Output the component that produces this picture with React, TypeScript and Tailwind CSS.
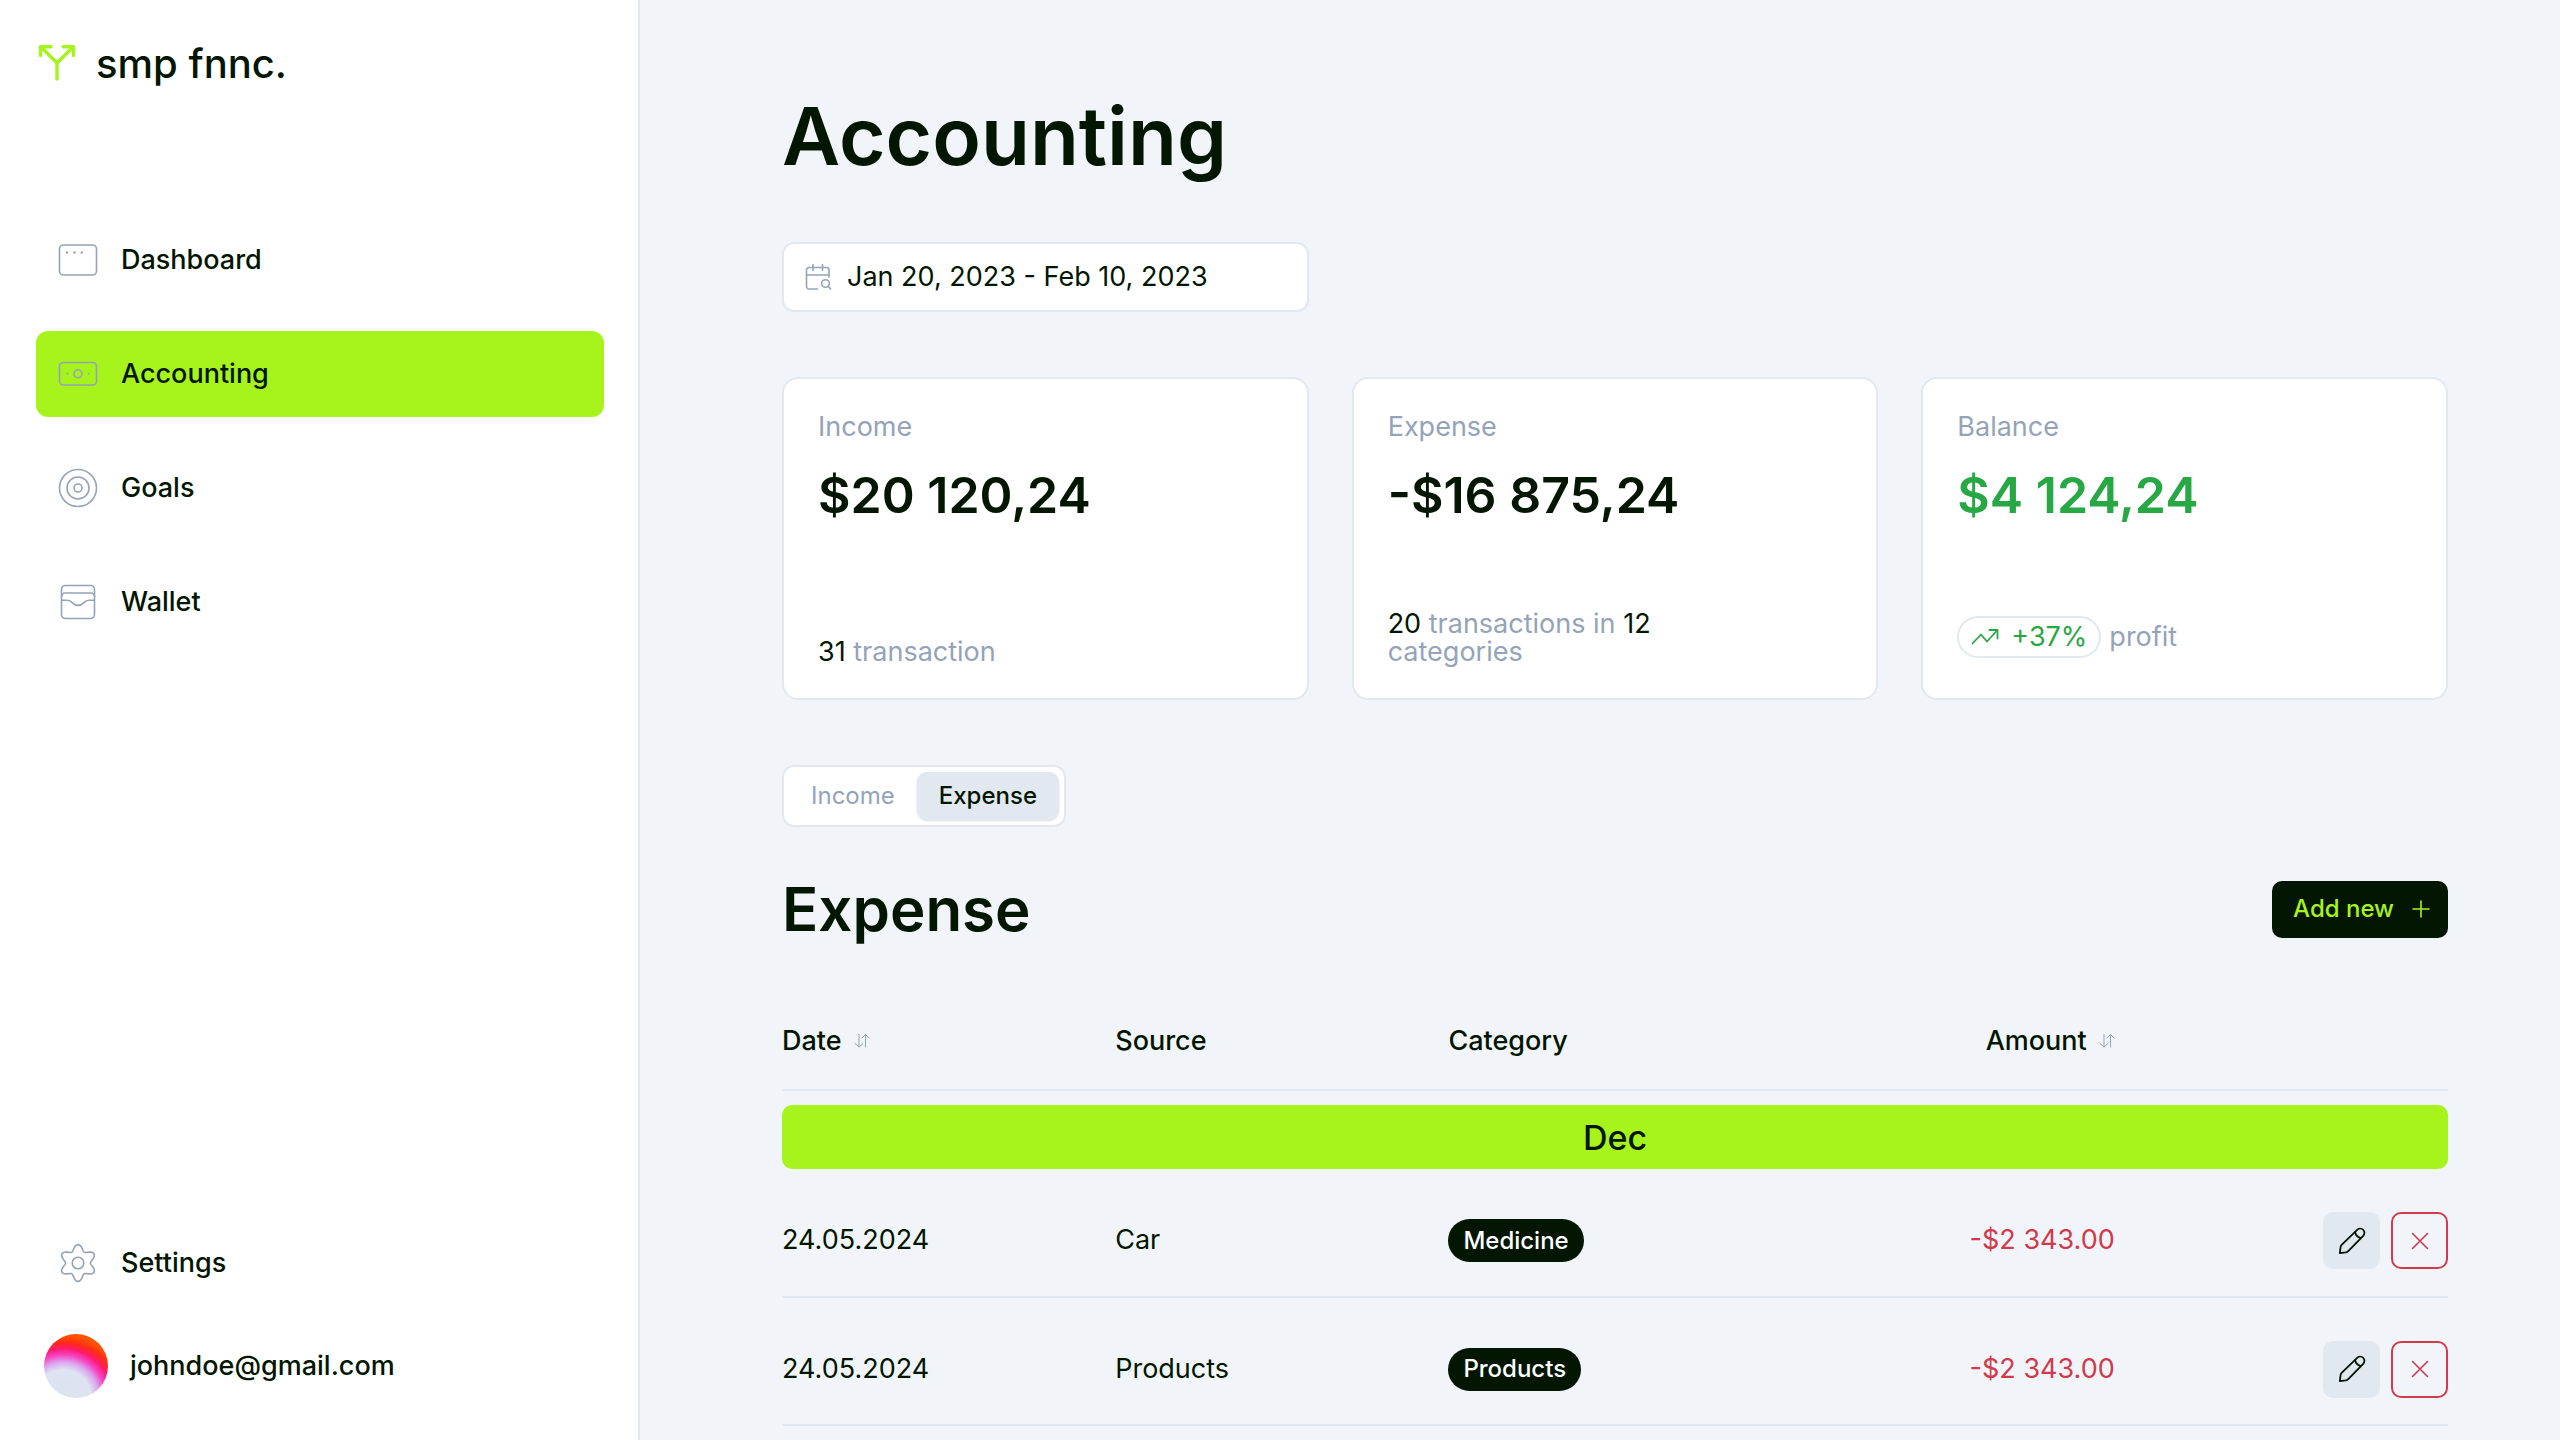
import { useState } from 'react';
import type { ReactNode } from 'react';

interface IconProps {
  className?: string;
}

interface NavItem {
  label: string;
  icon:  (props: IconProps) => ReactNode;
}

interface Transaction {
  id:       number;
  date:     string;
  source:   string;
  category: string;
  amount:   string;
}

const TABS = ['Income', 'Expense'];

const TRANSACTIONS: Transaction[] = [
  { id: 1, date: '24.05.2024', source: 'Car',      category: 'Medicine', amount: '-$2 343.00' },
  { id: 2, date: '24.05.2024', source: 'Products', category: 'Products', amount: '-$2 343.00' },
];

// Six-lobed gear outline, sampled around the centre of a 42x42 box
const GEAR_POINTS = Array.from({ length: 120 }, (_, i) => {
  const a = (i / 120) * Math.PI * 2;
  const r = 15.4 + 3 * Math.cos(6 * a);
  return `${(21 + r * Math.sin(a)).toFixed(2)},${(21 - r * Math.cos(a)).toFixed(2)}`;
}).join(' ');

function LogoIcon() {
  return (
    <svg viewBox="0 0 38 38" className="w-[38px] h-[38px] text-[#a6f41c]" fill="none" stroke="currentColor" strokeWidth="3.4" strokeLinecap="round" strokeLinejoin="round" aria-hidden="true">
      <path d="M19 34V18L3 2M19 18L35 2" />
      <path d="M2.500 10.500V1.800H13M35.500 10.500V1.800H25" />
    </svg>
  );
}

function DashboardIcon({ className }: IconProps) {
  return (
    <svg viewBox="0 0 42 42" className={className} fill="none" stroke="currentColor" strokeWidth="1.6" strokeLinecap="round" aria-hidden="true">
      <rect x="2.500" y="6" width="37" height="30" rx="4" />
      <path strokeWidth="2.400" d="M10 13.500h.02M17.500 13.500h.02M24.700 13.500h.02" />
    </svg>
  );
}

function CashIcon({ className }: IconProps) {
  return (
    <svg viewBox="0 0 42 42" className={className} fill="none" stroke="currentColor" strokeWidth="1.6" strokeLinecap="round" aria-hidden="true">
      <rect x="2.500" y="9.500" width="37" height="22.500" rx="4" />
      <circle cx="21" cy="20.800" r="4" />
      <path strokeWidth="2" d="M10.500 20.800h.02M31.500 20.800h.02" />
    </svg>
  );
}

function TargetIcon({ className }: IconProps) {
  return (
    <svg viewBox="0 0 42 42" className={className} fill="none" stroke="currentColor" strokeWidth="1.6" aria-hidden="true">
      <circle cx="21" cy="21" r="18.500" />
      <circle cx="21" cy="21" r="11" />
      <circle cx="21" cy="21" r="4" />
    </svg>
  );
}

function WalletIcon({ className }: IconProps) {
  return (
    <svg viewBox="0 0 42 42" className={className} fill="none" stroke="currentColor" strokeWidth="1.6" aria-hidden="true">
      <rect x="4.500" y="4.500" width="33" height="33" rx="4" />
      <path d="M4.500 16v-.5a3.500 3.500 0 0 1 3.500-3.500h26a3.500 3.500 0 0 1 3.500 3.500v.5" />
      <path d="M4.500 19.300h5.500c2.600 0 4 1.200 5.400 2.600c3.200 3.300 8 3.300 11.200 0c1.400-1.400 2.800-2.600 5.400-2.600h5.500" />
    </svg>
  );
}

function GearIcon({ className }: IconProps) {
  return (
    <svg viewBox="0 0 42 42" className={className} fill="none" stroke="currentColor" strokeWidth="1.6" strokeLinejoin="round" aria-hidden="true">
      <polygon points={GEAR_POINTS} />
      <circle cx="21" cy="21" r="5.800" />
    </svg>
  );
}

function CalendarIcon() {
  return (
    <svg viewBox="0 0 28 28" className="w-7 h-7 shrink-0 text-[#94a3b8]" fill="none" stroke="currentColor" strokeWidth="1.6" strokeLinecap="round" strokeLinejoin="round" aria-hidden="true">
      <path d="M13.500 26H5a2.500 2.500 0 0 1-2.500-2.500V7A2.500 2.500 0 0 1 5 4.500h17.500A2.500 2.500 0 0 1 25 7v7M2.500 12H25M9 1.500v6M18.500 1.500v6" />
      <circle cx="21.500" cy="20.500" r="3.800" />
      <path d="M24.300 23.300l2.200 2.700" />
    </svg>
  );
}

function TrendIcon() {
  return (
    <svg viewBox="0 0 28 20" className="w-7 h-5" fill="none" stroke="currentColor" strokeWidth="1.8" strokeLinecap="round" strokeLinejoin="round" aria-hidden="true">
      <path d="M1.500 16.500L10 7.500l6 7L26 3.500" />
      <path d="M18.500 3h8v8.500" />
    </svg>
  );
}

function SortIcon() {
  return (
    <svg viewBox="0 0 16 16" className="w-4 h-4 text-[#94a3b8]" fill="none" stroke="currentColor" strokeWidth="1" strokeLinecap="round" strokeLinejoin="round" aria-hidden="true">
      <path d="M5 1.500V14M1 10.500L5 14l4-3.500" />
      <path d="M11.500 14V1.500M8 5l3.500-3.500L15 5" />
    </svg>
  );
}

function PlusIcon() {
  return (
    <svg viewBox="0 0 18 18" className="w-[18px] h-[18px]" fill="none" stroke="currentColor" strokeWidth="1.6" strokeLinecap="round" aria-hidden="true">
      <path d="M9 1v16M1 9h16" />
    </svg>
  );
}

function PencilIcon() {
  return (
    <svg viewBox="0 0 28 28" className="w-7 h-7" fill="none" stroke="currentColor" strokeWidth="1.8" strokeLinecap="round" strokeLinejoin="round" aria-hidden="true">
      <path d="M1.800 26.200l.8-6.400a3.500 3.500 0 0 1 1-2L19.200 2.800a4.200 4.200 0 0 1 6 6L10 24.300a3.500 3.500 0 0 1-2 1z" />
      <path d="M17.200 5.500c.6 2.700 2.700 4.800 5.300 5.300" />
    </svg>
  );
}

function CloseIcon() {
  return (
    <svg viewBox="0 0 18 18" className="w-[18px] h-[18px]" fill="none" stroke="currentColor" strokeWidth="1.6" strokeLinecap="round" aria-hidden="true">
      <path d="M1.500 1.500l15 15M16.500 1.500l-15 15" />
    </svg>
  );
}

const NAV: NavItem[] = [
  { label: 'Dashboard',  icon: DashboardIcon },
  { label: 'Accounting', icon: CashIcon },
  { label: 'Goals',      icon: TargetIcon },
  { label: 'Wallet',     icon: WalletIcon },
];

function NavLink({ item, active }: { item: NavItem; active: boolean }) {
  const Icon = item.icon;
  return (
    <a
      href="#"
      aria-current={active ? 'page' : undefined}
      className={`flex items-center gap-[22px] h-[86px] px-[21px] rounded-xl text-[27px] font-medium ${active ? 'bg-[#a6f41c]' : ''}`}
    >
      <Icon className="w-[42px] h-[42px] shrink-0 text-[#94a3b8]" />
      {item.label}
    </a>
  );
}

function Sidebar() {
  return (
    <aside className="w-1/4 shrink-0 flex flex-col bg-white border-r-2 border-slate-200 pl-9 pr-[34px] pt-9 pb-[42px]">
      <div className="flex items-center gap-5 h-14 px-[2px] text-[40px] font-medium">
        <LogoIcon />
        smp fnnc.
      </div>
      <nav aria-label="Main" className="mt-[125px] flex flex-col gap-7">
        {NAV.map((item) => (
          <NavLink key={item.label} item={item} active={item.label === 'Accounting'} />
        ))}
      </nav>
      <div className="mt-auto flex flex-col gap-7">
        <NavLink item={{ label: 'Settings', icon: GearIcon }} active={false} />
        <div className="flex items-center gap-[22px] px-2 text-[27px] font-medium">
          <span className="w-16 h-16 shrink-0 rounded-full bg-[radial-gradient(circle_at_30%_100%,#d9e4ee_0%,#dfe3f2_36%,#dba6ee_46%,#f544c4_55%,#ff1a70_63%,#ff2a18_71%,#ff5200_80%)]" />
          johndoe@gmail.com
        </div>
      </div>
    </aside>
  );
}

interface StatCardProps {
  label:     string;
  value:     string;
  positive?: boolean;
  children:  ReactNode;
}

function StatCard({ label, value, positive, children }: StatCardProps) {
  return (
    <section className="flex flex-col h-[323px] px-[34px] pt-[30px] pb-8 bg-white border-2 border-slate-200 rounded-2xl">
      <h2 className="text-[27px] leading-9 text-[#94a3b8]">{label}</h2>
      <p className={`mt-5 text-[50px] leading-[60px] font-semibold ${positive ? 'text-[#28a745]' : ''}`}>{value}</p>
      <div className="mt-auto text-[27px] leading-7 text-[#94a3b8]">{children}</div>
    </section>
  );
}

function TransactionRow({ row }: { row: Transaction }) {
  return (
    <tr className="h-32 border-b-2 border-slate-200">
      <td className="pt-4">{row.date}</td>
      <td className="pt-4">{row.source}</td>
      <td className="pt-4">
        <span className="inline-flex items-center h-[43px] px-[15px] rounded-full bg-[#021602] text-white text-2xl font-medium">
          {row.category}
        </span>
      </td>
      <td className="pt-4 text-right text-[#d03a4b]">{row.amount}</td>
      <td className="pt-4">
        <div className="flex justify-end gap-[11px]">
          <button type="button" aria-label="Edit" className="w-[57px] h-[57px] flex items-center justify-center rounded-[10px] bg-slate-200">
            <PencilIcon />
          </button>
          <button type="button" aria-label="Delete" className="w-[57px] h-[57px] flex items-center justify-center rounded-[10px] border-2 border-[#d03a4b] text-[#d03a4b]">
            <CloseIcon />
          </button>
        </div>
      </td>
    </tr>
  );
}

export default function App() {
  const [tab, setTab] = useState('Expense');

  return (
    <div className="flex min-h-screen bg-slate-100 text-[#021602] font-[Inter,sans-serif]">
      <Sidebar />

      <main className="flex-1 min-w-0 pl-[142px] pr-28 pt-[92px]">
        <h1 className="text-[80px] leading-[88px] font-semibold">Accounting</h1>

        {/* Period */}
        <div className="mt-[62px] grid grid-cols-3 gap-x-[43px]">
          <label className="flex items-center gap-[15px] h-[70px] px-5 bg-white border-2 border-slate-200 rounded-xl">
            <CalendarIcon />
            <input type="text" aria-label="Period" defaultValue="Jan 20, 2023 - Feb 10, 2023" className="flex-1 min-w-0 bg-transparent text-[27px] outline-none" />
          </label>
        </div>

        {/* Summary */}
        <div className="mt-[65px] grid grid-cols-3 gap-x-[43px]">
          <StatCard label="Income" value="$20 120,24">
            <span className="text-[#021602]">31</span> transaction
          </StatCard>
          <StatCard label="Expense" value="-$16 875,24">
            <p className="max-w-[360px]">
              <span className="text-[#021602]">20</span> transactions in <span className="text-[#021602]">12</span> categories
            </p>
          </StatCard>
          <StatCard label="Balance" value="$4 124,24" positive>
            <div className="flex items-center gap-2 pb-2">
              <span className="inline-flex items-center gap-3 h-[42px] px-3 border-2 border-slate-200 rounded-full text-[#28a745]">
                <TrendIcon />
                +37%
              </span>
              profit
            </div>
          </StatCard>
        </div>

        <div role="tablist" className="mt-[65px] flex w-fit p-[5px] bg-white border-2 border-slate-200 rounded-xl">
          {TABS.map((t) => (
            <button
              key={t}
              type="button"
              role="tab"
              aria-selected={tab === t}
              onClick={() => setTab(t)}
              className={`h-12 px-[22px] rounded-[10px] text-2xl ${
                tab === t ? 'bg-slate-200 font-medium shadow-sm' : 'text-[#94a3b8]'
              }`}
            >
              {t}
            </button>
          ))}
        </div>

        {/* Transactions */}
        <div className="mt-[46px] flex items-center justify-between">
          <h2 className="text-[60px] leading-[72px] font-semibold">{tab}</h2>
          <button type="button" className="flex items-center gap-[18px] h-[57px] pl-[21px] pr-[18px] rounded-[10px] bg-[#021602] text-[#a6f41c] text-2xl font-medium">
            Add new
            <PlusIcon />
          </button>
        </div>

        <table className="mt-[46px] w-full table-fixed border-collapse text-[27px]">
          <thead>
            <tr className="h-[99px] border-b-2 border-slate-200 text-left">
              <th className="pt-[2px] font-medium">
                <button type="button" className="inline-flex items-center gap-3">
                  Date
                  <SortIcon />
                </button>
              </th>
              <th className="pt-[2px] font-medium">Source</th>
              <th className="pt-[2px] font-medium">Category</th>
              <th className="pt-[2px] font-medium text-right">
                <button type="button" className="inline-flex items-center gap-3">
                  Amount
                  <SortIcon />
                </button>
              </th>
              <th aria-label="Actions" />
            </tr>
          </thead>
          <tbody>
            <tr>
              <td colSpan={5} className="pt-[14px]">
                <div className="h-16 flex items-center justify-center rounded-[10px] bg-[#a6f41c] text-[34px] font-medium">Dec</div>
              </td>
            </tr>
            {TRANSACTIONS.map((row) => (
              <TransactionRow key={row.id} row={row} />
            ))}
          </tbody>
        </table>
      </main>
    </div>
  );
}
